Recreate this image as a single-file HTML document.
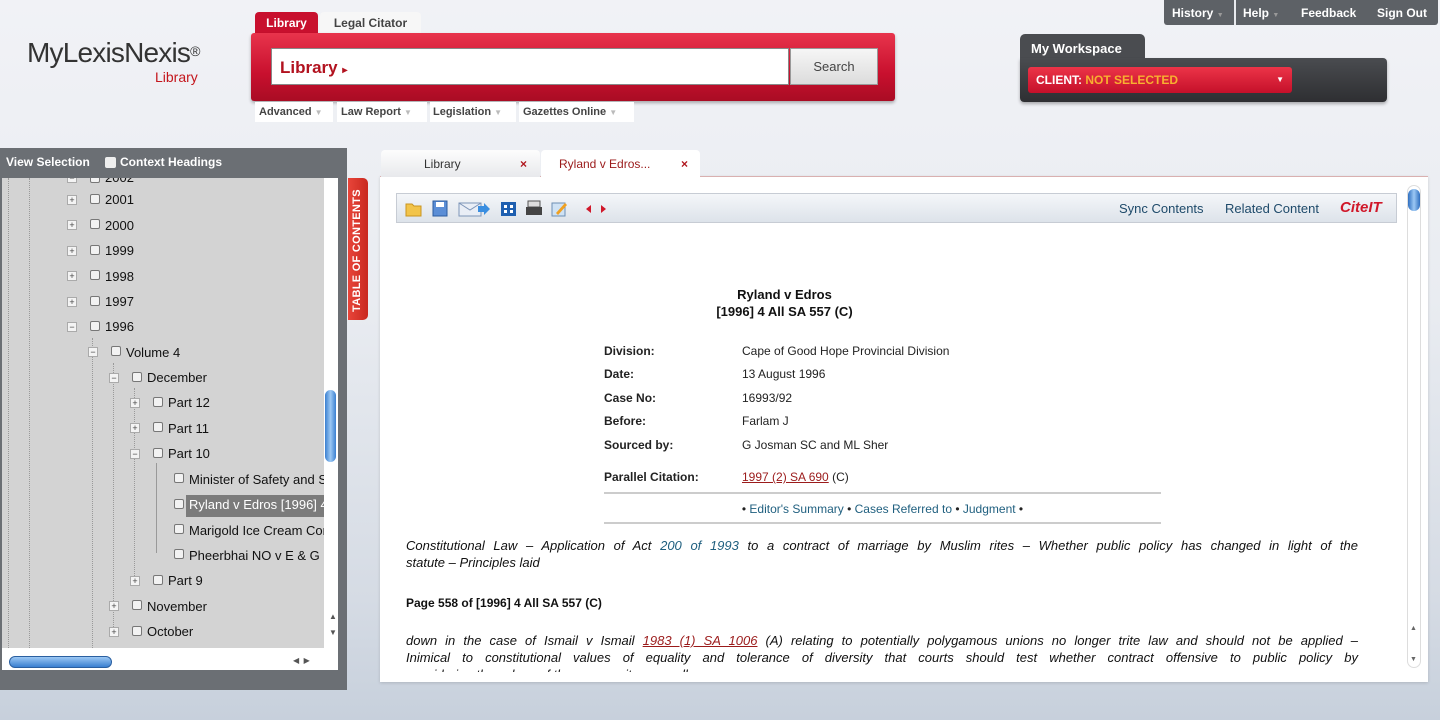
<!DOCTYPE html>
<html><head><meta charset="utf-8"><style>
*{margin:0;padding:0;box-sizing:border-box}
body{width:1440px;height:720px;overflow:hidden;position:relative;font-family:"Liberation Sans",sans-serif;background:linear-gradient(#f1f2f6 0,#e9ecf1 300px,#d5dbe4 600px,#c7d0dc 720px)}
.a{position:absolute}
.b{font-weight:bold}
.tr{position:absolute;font-size:13px;color:#111;white-space:nowrap}
.ex{position:absolute;width:10px;height:10px;border:1px solid #aaa;background:#f4f4f4;font-size:9px;line-height:8px;text-align:center;color:#444}
.cb{position:absolute;width:10px;height:10px;border:1px solid #777;border-radius:2px;background:#f2f2f2}
.lbl{position:absolute;font-size:12px;font-weight:bold;color:#222}
.val{position:absolute;font-size:12px;color:#222}
.it{font-style:italic;font-size:13px;color:#111;position:absolute;left:406px;width:952px;line-height:17px;white-space:nowrap}
.j{text-align:justify;text-align-last:justify;white-space:normal}
.lk{color:#1f5f7f}
.rl{color:#9b1b1b;text-decoration:underline}
</style></head><body>
<div class="a" style="left:27px;top:37px;font-size:28px;color:#333;letter-spacing:-0.8px;font-weight:300">MyLexisNexis<span style="font-size:14px;vertical-align:top;position:relative;top:6px">®</span></div>
<div class="a" style="left:155px;top:69px;font-size:14px;color:#c4161c">Library</div>
<div class="a b" style="left:255px;top:12px;width:63px;height:22px;background:#c8102e;color:#fff;font-size:12px;text-align:center;line-height:22px;border-radius:4px 4px 0 0">Library</div>
<div class="a b" style="left:320px;top:12px;width:101px;height:22px;background:#f7f7f7;color:#444;font-size:12px;text-align:center;line-height:22px;border-radius:4px 4px 0 0">Legal Citator</div>
<div class="a" style="left:251px;top:33px;width:644px;height:68px;background:linear-gradient(#e8344c,#c8102e 60%,#a90c24);border-radius:3px;box-shadow:0 2px 3px rgba(0,0,0,.3)"></div>
<div class="a" style="left:271px;top:48px;width:518px;height:37px;background:#fff;border:1px solid #888"></div>
<div class="a b" style="left:280px;top:58px;font-size:17px;color:#b2121f">Library <span style="font-size:10px">▸</span></div>
<div class="a" style="left:790px;top:48px;width:88px;height:37px;background:linear-gradient(#f6f6f6,#dcdcdc);border:1px solid #999;font-size:13px;color:#444;text-align:center;line-height:35px">Search</div>
<div class="a b" style="left:255px;top:102px;width:78px;height:20px;background:#fff;font-size:11px;color:#444;line-height:20px;padding-left:4px">Advanced <span style="color:#bbb;font-size:8px">▼</span></div>
<div class="a b" style="left:337px;top:102px;width:90px;height:20px;background:#fff;font-size:11px;color:#444;line-height:20px;padding-left:4px">Law Report <span style="color:#bbb;font-size:8px">▼</span></div>
<div class="a b" style="left:430px;top:102px;width:86px;height:20px;background:#fff;font-size:11px;color:#444;line-height:20px;padding-left:3px">Legislation <span style="color:#bbb;font-size:8px">▼</span></div>
<div class="a b" style="left:519px;top:102px;width:115px;height:20px;background:#fff;font-size:11px;color:#444;line-height:20px;padding-left:4px">Gazettes Online <span style="color:#bbb;font-size:8px">▼</span></div>
<div class="a" style="left:1164px;top:0;width:274px;height:25px;background:#5d6166;border-radius:0 0 3px 3px"></div>
<div class="a b" style="left:1172px;top:6px;font-size:12px;color:#fff">History <span style="color:#999;font-size:7px">▼</span></div>
<div class="a" style="left:1234px;top:0;width:2px;height:25px;background:#e8eaee"></div>
<div class="a b" style="left:1243px;top:6px;font-size:12px;color:#fff">Help <span style="color:#999;font-size:7px">▼</span></div>
<div class="a b" style="left:1301px;top:6px;font-size:12px;color:#fff">Feedback</div>
<div class="a b" style="left:1377px;top:6px;font-size:12px;color:#fff">Sign Out</div>
<div class="a b" style="left:1020px;top:34px;width:125px;height:26px;background:#4a4c50;border-radius:5px 5px 0 0;color:#fff;font-size:13px;padding:7px 0 0 11px">My Workspace</div>
<div class="a" style="left:1020px;top:58px;width:367px;height:44px;background:linear-gradient(#4a4c50,#2e2f32);border-radius:0 4px 4px 4px;box-shadow:0 2px 3px rgba(0,0,0,.3)"></div>
<div class="a b" style="left:1028px;top:67px;width:264px;height:26px;background:linear-gradient(#ec3448,#c5102a);border-radius:3px;font-size:12px;color:#fff;line-height:26px;padding-left:8px">CLIENT: <span style="color:#f8b030">NOT SELECTED</span><span style="position:absolute;right:8px;font-size:8px">▼</span></div>
<div class="a" style="left:0;top:148px;width:347px;height:542px;background:#6b6f74"></div>
<div class="a b" style="left:6px;top:155px;font-size:12px;color:#fff">View Selection</div>
<div class="a" style="left:105px;top:157px;width:11px;height:11px;background:#eee;border-radius:2px"></div>
<div class="a b" style="left:120px;top:155px;font-size:12px;color:#fff">Context Headings</div>
<div class="a" style="left:2px;top:178px;width:336px;height:492px;background:#d3d3d3;overflow:hidden">
<div class="a" style="left:6px;top:0;width:0;height:492px;border-left:1px dotted #999"></div>
<div class="a" style="left:27px;top:0;width:0;height:492px;border-left:1px dotted #999"></div>
<div class="a" style="left:90px;top:160px;width:0;height:332px;border-left:1px dotted #999"></div>
<div class="a" style="left:111px;top:185px;width:0;height:270px;border-left:1px dotted #999"></div>
<div class="a" style="left:132px;top:210px;width:0;height:190px;border-left:1px dotted #999"></div>
<div class="a" style="left:154px;top:285px;width:0;height:90px;border-left:1px solid #999"></div>
</div>
<div class="a" style="left:2px;top:178px;width:336px;height:492px;overflow:hidden">
<div class="ex" style="left:65px;top:-5px">−</div><div class="cb" style="left:88px;top:-5px"></div><div class="tr" style="left:103px;top:-8px">2002</div>
<div class="ex" style="left:65px;top:17px">+</div><div class="cb" style="left:88px;top:16px"></div><div class="tr" style="left:103px;top:14px">2001</div>
<div class="ex" style="left:65px;top:42px">+</div><div class="cb" style="left:88px;top:41px"></div><div class="tr" style="left:103px;top:40px">2000</div>
<div class="ex" style="left:65px;top:68px">+</div><div class="cb" style="left:88px;top:67px"></div><div class="tr" style="left:103px;top:65px">1999</div>
<div class="ex" style="left:65px;top:93px">+</div><div class="cb" style="left:88px;top:92px"></div><div class="tr" style="left:103px;top:91px">1998</div>
<div class="ex" style="left:65px;top:119px">+</div><div class="cb" style="left:88px;top:118px"></div><div class="tr" style="left:103px;top:116px">1997</div>
<div class="ex" style="left:65px;top:144px">−</div><div class="cb" style="left:88px;top:143px"></div><div class="tr" style="left:103px;top:141px">1996</div>
<div class="ex" style="left:86px;top:169px">−</div><div class="cb" style="left:109px;top:168px"></div><div class="tr" style="left:124px;top:167px">Volume 4</div>
<div class="ex" style="left:107px;top:195px">−</div><div class="cb" style="left:130px;top:194px"></div><div class="tr" style="left:145px;top:192px">December</div>
<div class="ex" style="left:128px;top:220px">+</div><div class="cb" style="left:151px;top:219px"></div><div class="tr" style="left:166px;top:217px">Part 12</div>
<div class="ex" style="left:128px;top:245px">+</div><div class="cb" style="left:151px;top:244px"></div><div class="tr" style="left:166px;top:243px">Part 11</div>
<div class="ex" style="left:128px;top:271px">−</div><div class="cb" style="left:151px;top:270px"></div><div class="tr" style="left:166px;top:268px">Part 10</div>
<div class="cb" style="left:172px;top:295px"></div><div class="tr" style="left:187px;top:294px">Minister of Safety and Security</div>
<div class="a" style="left:184px;top:317px;width:140px;height:22px;background:#7b7b7b"></div>
<div class="cb" style="left:172px;top:321px"></div><div class="tr" style="left:187px;top:319px;color:#fff">Ryland v Edros [1996] 4 All SA</div>
<div class="cb" style="left:172px;top:346px"></div><div class="tr" style="left:187px;top:345px">Marigold Ice Cream Company</div>
<div class="cb" style="left:172px;top:371px"></div><div class="tr" style="left:187px;top:370px">Pheerbhai NO v E &amp; G Co</div>
<div class="ex" style="left:128px;top:398px">+</div><div class="cb" style="left:151px;top:397px"></div><div class="tr" style="left:166px;top:395px">Part 9</div>
<div class="ex" style="left:107px;top:423px">+</div><div class="cb" style="left:130px;top:422px"></div><div class="tr" style="left:145px;top:421px">November</div>
<div class="ex" style="left:107px;top:449px">+</div><div class="cb" style="left:130px;top:448px"></div><div class="tr" style="left:145px;top:446px">October</div>
<div class="cb" style="left:109px;top:473px"></div><div class="tr" style="left:124px;top:471px">Volume 3</div>
<div class="a" style="left:0;top:470px;width:336px;height:22px;background:#fff"></div>
<div class="a" style="left:322px;top:0;width:14px;height:470px;background:#fff"></div>
</div>
<div class="a" style="left:325px;top:390px;width:11px;height:72px;background:linear-gradient(90deg,#3a7fd0,#9cc8f4,#3a7fd0);border-radius:6px"></div>
<div class="a" style="left:329px;top:612px;font-size:8px;color:#555">▲</div>
<div class="a" style="left:329px;top:628px;font-size:8px;color:#555">▼</div>
<div class="a" style="left:9px;top:656px;width:103px;height:12px;background:linear-gradient(#9cc8f4,#3a7fd0);border-radius:6px;border:1px solid #2a5fa0"></div>
<div class="a" style="left:293px;top:656px;font-size:8px;color:#555">◀ &nbsp;▶</div>
<div class="a" style="left:348px;top:178px;width:20px;height:142px;background:linear-gradient(90deg,#e8453a,#c9281f);border-radius:0 5px 5px 0"></div>
<div class="a b" style="left:351px;top:312px;transform:rotate(-90deg);transform-origin:0 0;font-size:11px;color:#fff;white-space:nowrap;letter-spacing:.3px">TABLE OF CONTENTS</div>
<div class="a" style="left:380px;top:176px;width:1048px;height:506px;background:#fff;border-top:1px solid #d9b0b0;box-shadow:0 1px 3px rgba(0,0,0,.15)"></div>
<div class="a" style="left:381px;top:150px;width:159px;height:27px;background:linear-gradient(#fdfdfd,#e8e9ec);border-radius:4px 4px 0 0;font-size:12px;color:#333;line-height:28px;padding-left:43px">Library<span style="position:absolute;left:139px;color:#b0161e;font-weight:bold">×</span></div>
<div class="a" style="left:541px;top:150px;width:159px;height:28px;background:#fff;border-radius:4px 4px 0 0;font-size:12px;color:#9b1b1b;line-height:28px;padding-left:18px">Ryland v Edros...<span style="position:absolute;left:140px;color:#b0161e;font-weight:bold">×</span></div>
<div class="a" style="left:396px;top:193px;width:1001px;height:30px;background:linear-gradient(#f4f6f9,#dde3ea);border:1px solid #c7ccd4"></div>
<svg class="a" style="left:404px;top:199px" width="210" height="20">
<path d="M2 5h6l2 2h7v10H2z" fill="#f2c44a" stroke="#c99520"/>
<rect x="29" y="2" width="14" height="15" fill="#5b8ed6" stroke="#2b5ca0"/><rect x="32" y="3" width="8" height="5" fill="#fff"/>
<rect x="55" y="4" width="22" height="13" fill="#e9eef6" stroke="#7d95b8"/><path d="M55 4l11 7 11-7" fill="none" stroke="#7d95b8"/><path d="M74 7h6v-3l6 6-6 6v-3h-6z" fill="#3a8ee0"/>
<rect x="97" y="3" width="15" height="14" fill="#1e5fb0"/><rect x="100" y="6" width="3" height="3" fill="#fff"/><rect x="106" y="6" width="3" height="3" fill="#fff"/><rect x="100" y="11" width="3" height="3" fill="#fff"/><rect x="106" y="11" width="3" height="3" fill="#fff"/>
<rect x="124" y="2" width="12" height="6" fill="#ddd" stroke="#555"/><rect x="122" y="8" width="16" height="8" fill="#444"/>
<rect x="148" y="4" width="13" height="13" fill="#cfe2f4" stroke="#6c8fb4"/><path d="M152 14l9-10 2 2-9 10z" fill="#f0a020"/>
<path d="M187 6v8l-5-4z" fill="#d0182a"/><path d="M197 6v8l5-4z" fill="#d0182a"/>
</svg>
<div class="a" style="left:1119px;top:201px;font-size:13px;color:#1e4a6a">Sync Contents</div>
<div class="a" style="left:1225px;top:201px;font-size:13px;color:#1e4a6a">Related Content</div>
<div class="a b" style="left:1340px;top:199px;font-size:15px;color:#d0182a;font-style:italic">CiteIT</div>
<div class="a" style="left:1407px;top:185px;width:14px;height:483px;background:#fff;border:1px solid #ddd;border-radius:7px"></div>
<div class="a" style="left:1408px;top:189px;width:12px;height:22px;background:linear-gradient(90deg,#2f6fc0,#9cc8f4,#2f6fc0);border-radius:6px"></div>
<div class="a" style="left:1410px;top:625px;font-size:7px;color:#666">▲</div>
<div class="a" style="left:1410px;top:656px;font-size:7px;color:#666">▼</div>
<div class="a b" style="left:600px;top:286px;width:369px;text-align:center;font-size:13px;color:#111;line-height:17px">Ryland v Edros<br>[1996] 4 All SA 557 (C)</div>
<div class="lbl" style="left:604px;top:344px">Division:</div><div class="val" style="left:742px;top:344px">Cape of Good Hope Provincial Division</div>
<div class="lbl" style="left:604px;top:367px">Date:</div><div class="val" style="left:742px;top:367px">13 August 1996</div>
<div class="lbl" style="left:604px;top:391px">Case No:</div><div class="val" style="left:742px;top:391px">16993/92</div>
<div class="lbl" style="left:604px;top:414px">Before:</div><div class="val" style="left:742px;top:414px">Farlam J</div>
<div class="lbl" style="left:604px;top:438px">Sourced by:</div><div class="val" style="left:742px;top:438px">G Josman SC and ML Sher</div>
<div class="lbl" style="left:604px;top:470px">Parallel Citation:</div><div class="val" style="left:742px;top:470px"><span class="rl">1997 (2) SA 690</span> (C)</div>
<div class="a" style="left:604px;top:492px;width:557px;height:2px;background:#ccc"></div>
<div class="a" style="left:604px;top:502px;width:557px;text-align:center;font-size:12px;color:#222">• <span class="lk">Editor's Summary</span> • <span class="lk">Cases Referred to</span> • <span class="lk">Judgment</span> •</div>
<div class="a" style="left:604px;top:522px;width:557px;height:2px;background:#ccc"></div>
<div class="it j" style="top:537px">Constitutional Law – Application of Act <span class="lk">200 of 1993</span> to a contract of marriage by Muslim rites – Whether public policy has changed in light of the</div>
<div class="it" style="top:554px">statute – Principles laid</div>
<div class="a b" style="left:406px;top:596px;font-size:12px;color:#111">Page 558 of [1996] 4 All SA 557 (C)</div>
<div class="it j" style="top:632px">down in the case of Ismail v Ismail <span class="rl">1983 (1) SA 1006</span> (A) relating to potentially polygamous unions no longer trite law and should not be applied –</div>
<div class="it j" style="top:649px">Inimical to constitutional values of equality and tolerance of diversity that courts should test whether contract offensive to public policy by</div>
<div class="it" style="top:666px;height:6px;overflow:hidden">considering the values of the community generally</div>
</body></html>
